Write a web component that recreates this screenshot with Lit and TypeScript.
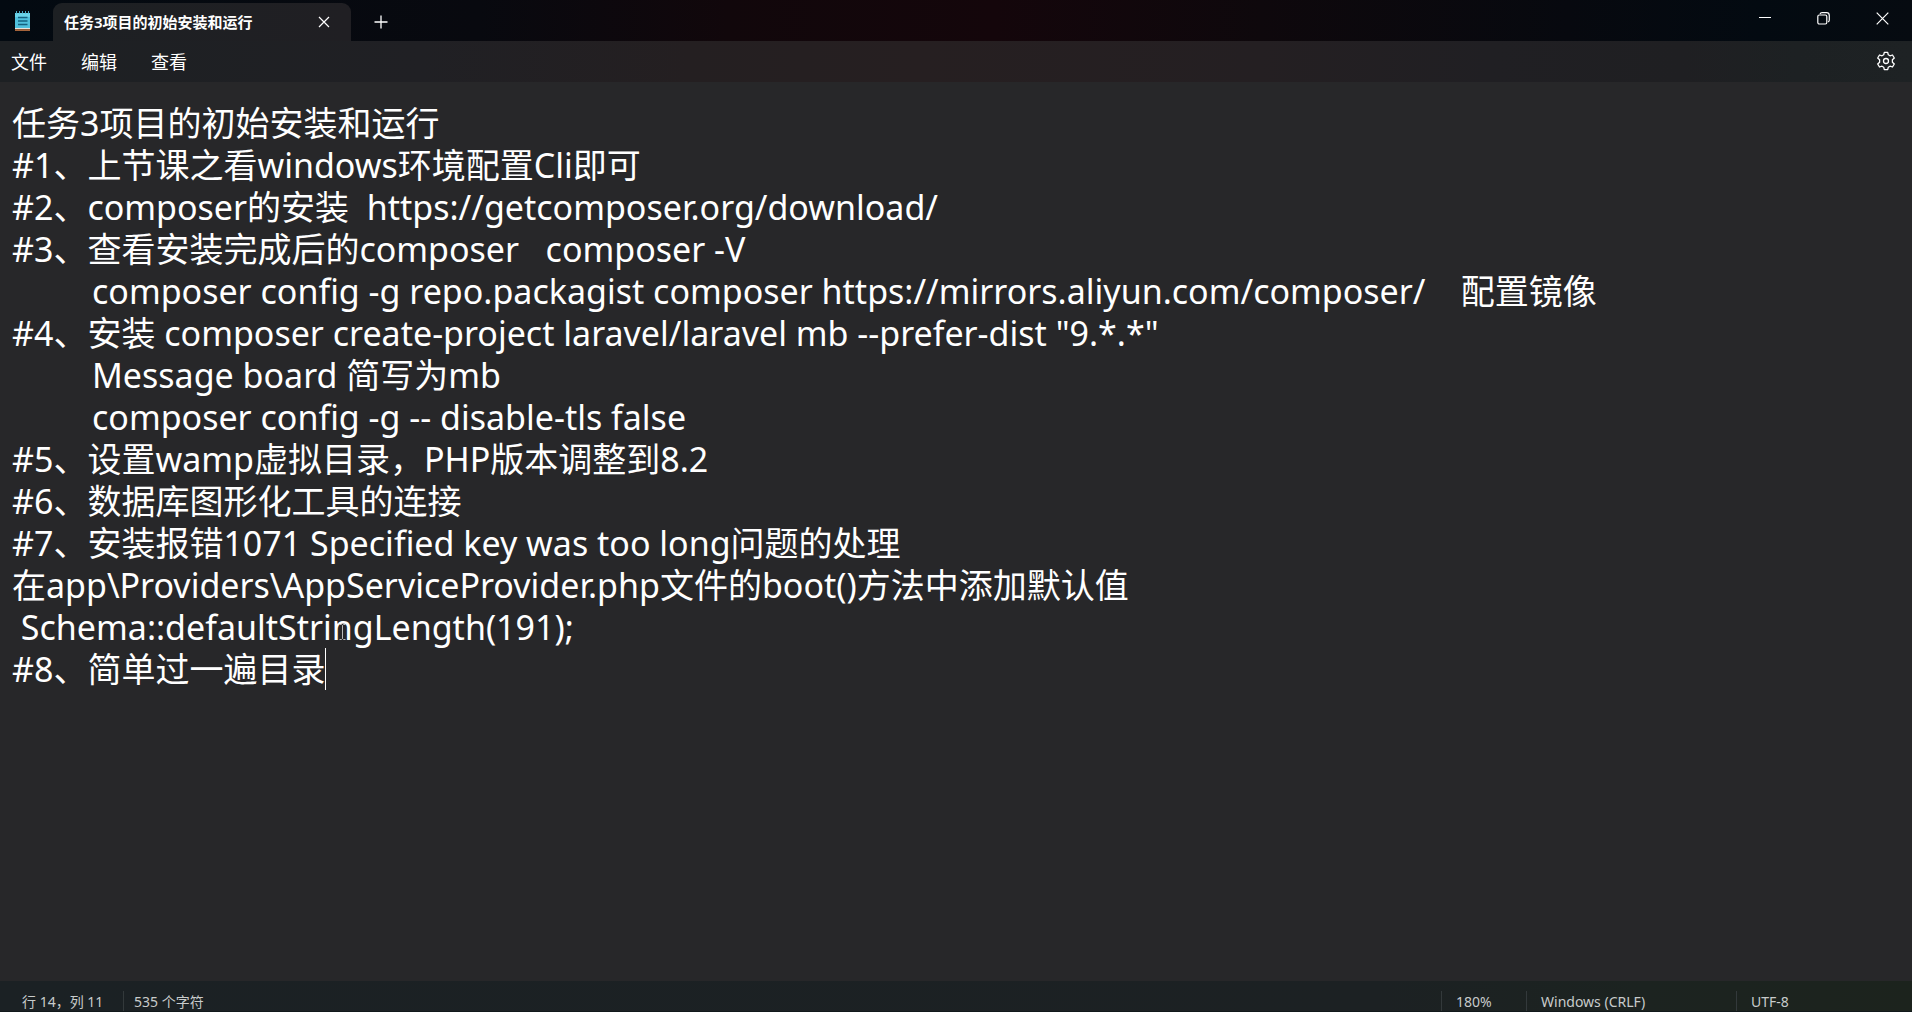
import { LitElement, html, css, svg } from "lit";
import { customElement, state } from "lit/decorators.js";

const NOTE = [
  "任务3项目的初始安装和运行",
  "#1、上节课之看windows环境配置Cli即可",
  "#2、composer的安装  https://getcomposer.org/download/",
  "#3、查看安装完成后的composer   composer -V",
  "\tcomposer config -g repo.packagist composer https://mirrors.aliyun.com/composer/    配置镜像",
  '#4、安装 composer create-project laravel/laravel mb --prefer-dist "9.*.*"',
  "\tMessage board 简写为mb",
  "\tcomposer config -g -- disable-tls false",
  "#5、设置wamp虚拟目录，PHP版本调整到8.2",
  "#6、数据库图形化工具的连接",
  "#7、安装报错1071 Specified key was too long问题的处理",
  "在app\\Providers\\AppServiceProvider.php文件的boot()方法中添加默认值",
  " Schema::defaultStringLength(191);",
  "#8、简单过一遍目录",
].join("\n");

const notepadIcon = svg`
  <rect x="1" y="2" width="15" height="15" fill="#4fc0dc"/>
  <rect x="1" y="2" width="15" height="4" fill="#6ad3e8"/>
  <path d="M2.500 0v2.500M5.500 0v2.500M8.500 0v2.500M11.500 0v2.500M14.500 0v2.500" stroke="#4aa9c4" stroke-width="1"/>
  <path d="M4 6.500h9.500M4 10h9.500M4 13.500h9.500" stroke="#14617f" stroke-width="1.300"/>
  <rect x="1" y="17" width="15" height="1.200" fill="#e8e2da"/>
  <rect x="1" y="18.200" width="15" height="1.800" fill="#a5633a"/>`;

@customElement("app-root")
export class AppRoot extends LitElement {
  static styles = css`
    :host {
      display: flex;
      flex-direction: column;
      height: 100vh;
      overflow: hidden;
      background: #272729;
      color: #fff;
      font-family: "Noto Sans", "Noto Sans CJK SC", sans-serif;
    }
    button {
      margin: 0;
      padding: 0;
      border: 0;
      background: none;
      color: inherit;
      font: inherit;
      display: flex;
      align-items: center;
      justify-content: center;
    }
    svg { display: block; fill: none; stroke: currentColor; }
    .titlebar {
      display: flex;
      flex: none;
      height: 41px;
      background: linear-gradient(90deg, #030a11 0%, #08090f 25%, #11070b 38%, #14060b 52%, #0e080c 66%, #07090f 82%, #030a11 92%, #060b11 100%);
    }
    .app-icon { width: 53px; padding: 11px 0 0 14px; box-sizing: border-box; }
    .app-icon svg { stroke: none; }
    .tab {
      display: flex;
      align-items: center;
      justify-content: space-between;
      width: 298px;
      margin-top: 3px;
      padding: 0 17px 0 11px;
      box-sizing: border-box;
      border-radius: 9px 9px 0 0;
      background: linear-gradient(90deg, #1d2023, #201f23);
      font-size: 15px;
      font-weight: 600;
    }
    .tab-title { white-space: nowrap; line-height: 20px; }
    .tab-close { width: 20px; height: 20px; }
    .add { width: 40px; height: 40px; margin-left: 10px; padding-top: 4px; }
    .window-controls { display: flex; margin-left: auto; }
    .window-controls button { width: 59px; height: 36px; }
    .menubar {
      display: flex;
      flex: none;
      align-items: center;
      height: 41px;
      padding-bottom: 2px;
      box-sizing: border-box;
      background: linear-gradient(90deg, #1d2023 0%, #202024 22%, #241f21 36%, #261f21 48%, #241f22 66%, #201f23 78%, #1f1f22 88%, #1d2123 94%, #1e2224 100%);
      font-size: 18px;
    }
    .menu { display: flex; gap: 34px; padding-left: 11px; }
    .settings { width: 24px; height: 24px; margin: 0 14px 0 auto; }
    .editor { position: relative; display: flex; flex: 1; min-height: 0; }
    .text {
      flex: 1;
      margin: 0;
      padding: 20px 12px 0;
      border: 0;
      outline: 0;
      resize: none;
      overflow: hidden;
      background: #272729;
      color: #fff;
      font: inherit;
      font-size: 34px;
      line-height: 42px;
      white-space: pre;
      tab-size: 80px;
    }
    .caret { position: absolute; left: 325px; top: 566px; width: 1px; height: 42px; background: #fff; }
    .pointer { position: absolute; left: 338px; top: 542px; color: #bbb; }
    .statusbar {
      display: flex;
      flex: none;
      height: 31px;
      padding-top: 10px;
      box-sizing: border-box;
      border-bottom: 1px solid #11191b;
      background: linear-gradient(90deg, #1b2124 0%, #1c2123 72%, #1c2320 86%, #1c231d 100%);
      color: #c8cbcb;
      font-size: 14px;
      line-height: 22px;
      white-space: nowrap;
    }
    .cell { box-sizing: border-box; padding-left: 14px; border-left: 1px solid #33393b; }
    .position { width: 123px; padding-left: 22px; border: 0; }
    .count { padding-left: 10px; margin-right: auto; }
    .zoom { width: 85px; }
    .eol { width: 210px; }
    .encoding { width: 176px; }
  `;

  @state() private note = NOTE;

  private onInput(e: Event) {
    this.note = (e.target as HTMLTextAreaElement).value;
  }

  render() {
    return html`
      <header class="titlebar">
        <div class="app-icon"><svg width="17" height="20" viewBox="0 0 17 20">${notepadIcon}</svg></div>
        <div class="tab">
          <span class="tab-title">任务3项目的初始安装和运行</span>
          <button class="tab-close" aria-label="关闭标签页">
            <svg width="12" height="12" viewBox="0 0 12 12"><path d="M1 1l10 10M11 1L1 11" stroke-width="1.200"/></svg>
          </button>
        </div>
        <button class="add" aria-label="新建标签页">
          <svg width="14" height="14" viewBox="0 0 14 14"><path d="M7 .5v13M.5 7h13" stroke-width="1.300"/></svg>
        </button>
        <div class="window-controls">
          <button aria-label="最小化">
            <svg width="12" height="12" viewBox="0 0 12 12"><path d="M0 5.500h12"/></svg>
          </button>
          <button aria-label="还原">
            <svg width="13" height="13" viewBox="0 0 13 13" stroke-width="1.200"><rect x=".8" y="3" width="9" height="9" rx="1.500"/><path d="M3 1.900Q3.500.7 5 .7h4.500q2.800 0 2.800 2.800V8q0 1.500-1.200 2"/></svg>
          </button>
          <button aria-label="关闭">
            <svg width="13" height="13" viewBox="0 0 13 13"><path d="M.7.7l11.600 11.600M12.300.7L.7 12.300" stroke-width="1.200"/></svg>
          </button>
        </div>
      </header>
      <nav class="menubar">
        <div class="menu">
          <button>文件</button>
          <button>编辑</button>
          <button>查看</button>
        </div>
        <button class="settings" aria-label="设置">
          <svg width="20" height="20" viewBox="0 0 20 20" stroke-width="1.300" stroke-linejoin="round">
            <circle cx="10" cy="10" r="2.500"/>
            <path d="M8.300 1.300h3.400l.6 2.500 1.700 1 2.500-.8 1.800 3-1.900 1.800v2.400l1.900 1.800-1.800 3-2.500-.8-1.700 1-.6 2.500H8.300l-.6-2.500-1.700-1-2.500.8-1.800-3 1.900-1.800V8.800L1.700 7l1.800-3 2.500.8 1.700-1z"/>
          </svg>
        </button>
      </nav>
      <main class="editor">
        <textarea class="text" aria-label="文本编辑器" spellcheck="false" .value=${this.note} @input=${this.onInput}></textarea>
        <span class="caret"></span>
        <svg class="pointer" width="9" height="16" viewBox="0 0 9 16"><path d="M1.500.5h2l1 1 1-1h2M4.500 1.500v13M1.500 15.500h2l1-1 1 1h2"/></svg>
      </main>
      <footer class="statusbar">
        <span class="cell position">行 14，列 11</span>
        <span class="cell count">535 个字符</span>
        <span class="cell zoom">180%</span>
        <span class="cell eol">Windows (CRLF)</span>
        <span class="cell encoding">UTF-8</span>
      </footer>
    `;
  }
}
